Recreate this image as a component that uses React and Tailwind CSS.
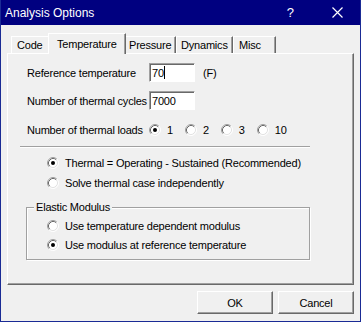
const Radio = ({ on }) => (
  <svg width="12" height="12" viewBox="0 0 12 12" className="shrink-0">
    <circle cx="6" cy="6" r="5" fill="#ffffff" />
    <path d="M2.11 9.89 A5.5 5.5 0 0 1 9.89 2.11" fill="none" stroke="#a0a0a0" strokeWidth="1" />
    <path d="M2.82 9.18 A4.5 4.5 0 0 1 9.18 2.82" fill="none" stroke="#696969" strokeWidth="1" />
    <path d="M9.89 2.11 A5.5 5.5 0 0 1 2.11 9.89" fill="none" stroke="#ffffff" strokeWidth="1" />
    <path d="M9.18 2.82 A4.5 4.5 0 0 1 2.82 9.18" fill="none" stroke="#e3e3e3" strokeWidth="1" />
    {on && <circle cx="6" cy="6" r="2" fill="#000000" />}
  </svg>
);

const RadioLabel = ({ on, children, className = '' }) => (
  <div className={`flex items-center gap-[6px] h-[14px] ${className}`}>
    <Radio on={on} />
    <span>{children}</span>
  </div>
);

const Field = ({ value, caret }) => (
  <div className="w-[46px] h-[19px] bg-white border border-t-[#a0a0a0] border-l-[#a0a0a0] border-r-white border-b-white shadow-[inset_1px_1px_#696969] flex items-center pl-[2px] text-black">
    <span>{value}</span>
    {caret && <span className="w-px h-[13px] bg-black" />}
  </div>
);

const Tab = ({ label, active, className = '' }) =>
  active ? (
    <div className={`relative z-10 h-[21px] -mb-px -mx-[2px] px-[6px] flex items-center bg-[#f0f0f0] border-t border-l border-white border-r border-r-[#696969] shadow-[inset_-1px_0_#a0a0a0] ${className}`}>
      {label}
    </div>
  ) : (
    <div className={`h-[17px] mt-[3px] flex items-center bg-[#f0f0f0] border-t border-l border-white border-r border-r-[#696969] shadow-[inset_-1px_0_#a0a0a0] ${className}`}>
      {label}
    </div>
  );

const Button = ({ children }) => (
  <button className="w-[76px] h-[23px] bg-[#f0f0f0] border border-t-white border-l-white border-r-[#696969] border-b-[#696969] shadow-[inset_-1px_-1px_#a0a0a0] flex items-center justify-center text-black">
    {children}
  </button>
);

export default function App() {
  return (
    <div
      className="w-[361px] h-[322px] bg-[#f0f0f0] border-x border-b border-[#1a2b95] flex flex-col text-[11px] leading-[14px] tracking-[-0.2px] text-black select-none"
      style={{ fontFamily: '"Liberation Sans", Arial, sans-serif' }}
    >
      <div className="h-[25px] shrink-0 bg-[#000080] flex items-center pl-[4px] text-white text-[12px] tracking-normal">
        <span>Analysis Options</span>
        <span className="ml-auto mr-[38px] text-[13px]">?</span>
        <svg width="11" height="11" viewBox="0 0 11 11" className="mr-[17px]">
          <path d="M0.5 0.5 L10.5 10.5 M10.5 0.5 L0.5 10.5" stroke="#ffffff" strokeWidth="1.2" />
        </svg>
      </div>

      <div className="flex flex-col px-[6px] pt-[8px]">
        <div className="flex h-[20px] pl-[4px] items-start">
          <Tab label="Code" className="w-[39px] pl-[5px]" />
          <Tab label="Temperature" active className="w-[78px] pl-[8px]" />
          <Tab label="Pressure" className="w-[52px] pl-[4px]" />
          <Tab label="Dynamics" className="w-[57px] pl-[4px]" />
          <Tab label="Misc" className="w-[43px] pl-[5px]" />
        </div>

        <div className="h-[232px] border-t border-l border-white border-r border-b border-r-[#696969] border-b-[#696969] shadow-[inset_-1px_-1px_#a0a0a0] flex flex-col pl-[19px] pt-[9px]">
          <div className="flex items-center h-[19px]">
            <span className="w-[122px]">Reference temperature</span>
            <Field value="70" caret />
            <span className="ml-[8px]">(F)</span>
          </div>
          <div className="flex items-center h-[19px] mt-[9px]">
            <span className="w-[122px]">Number of thermal cycles</span>
            <Field value="7000" />
          </div>
          <div className="flex items-center h-[19px] mt-[10px]">
            <span className="w-[122px]">Number of thermal loads</span>
            <RadioLabel on>1</RadioLabel>
            <RadioLabel className="ml-[12px]">2</RadioLabel>
            <RadioLabel className="ml-[12px]">3</RadioLabel>
            <RadioLabel className="ml-[12px]">10</RadioLabel>
          </div>

          <div className="w-[290px] -ml-[7px] mt-[7px] border-t border-[#a0a0a0] border-b border-b-white" />

          <div className="flex flex-col pl-[20px] mt-[8px] gap-[6px]">
            <RadioLabel on>Thermal = Operating - Sustained (Recommended)</RadioLabel>
            <RadioLabel>Solve thermal case independently</RadioLabel>
          </div>

          <div className="relative w-[284px] h-[53px] -ml-px mt-[17px] border border-[#a0a0a0] shadow-[1px_1px_#ffffff,inset_1px_1px_#ffffff]">
            <span className="absolute -top-[8px] left-[7px] bg-[#f0f0f0] px-[2px] leading-[14px]">Elastic Modulus</span>
            <div className="flex flex-col pl-[20px] pt-[11px] gap-[5px]">
              <RadioLabel>Use temperature dependent modulus</RadioLabel>
              <RadioLabel on>Use modulus at reference temperature</RadioLabel>
            </div>
          </div>
        </div>
      </div>

      <div className="flex justify-end gap-[5px] pr-[6px] mt-[6px]">
        <Button>OK</Button>
        <Button>Cancel</Button>
      </div>
    </div>
  );
}
